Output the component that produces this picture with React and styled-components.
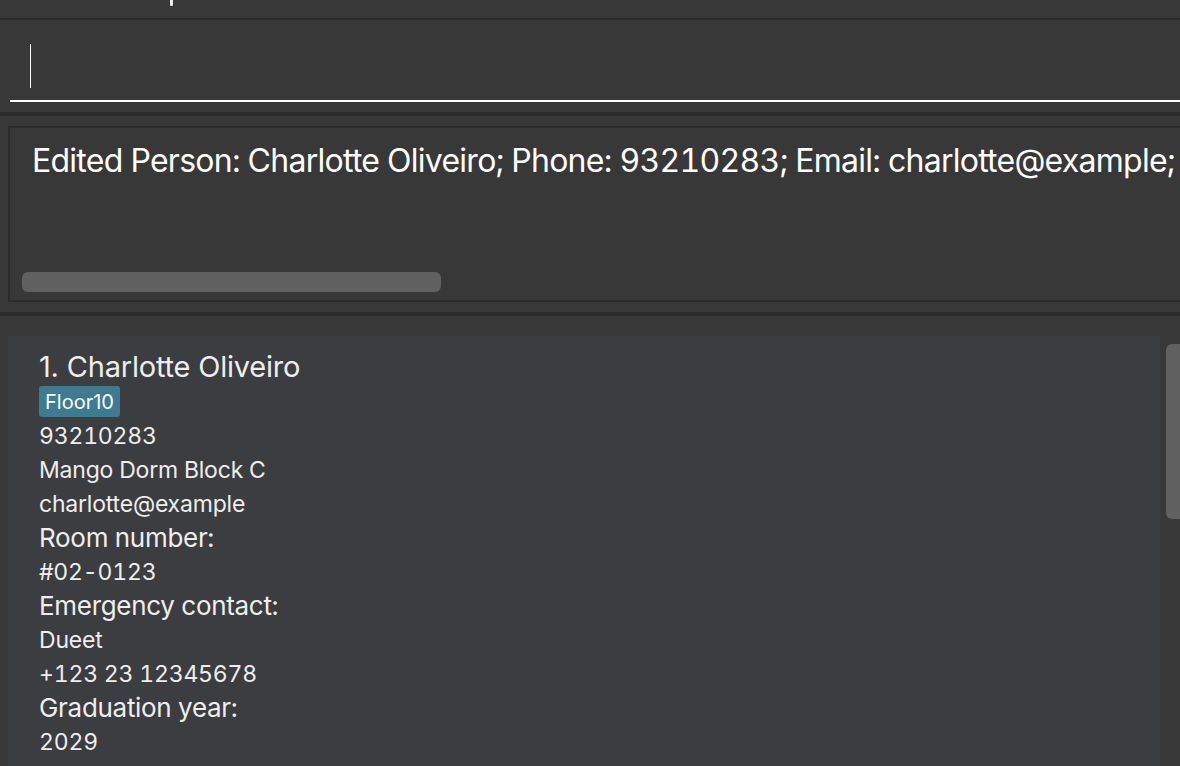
import styled, { createGlobalStyle } from "styled-components";

const GlobalStyle = createGlobalStyle`
  html, body {
    margin: 0;
    padding: 0;
    background-color: #383838;
    overflow: hidden;
  }
  * {
    box-sizing: border-box;
  }
`;

const Window = styled.div`
  width: 1180px;
  height: 766px;
  display: flex;
  flex-direction: column;
  background-color: #383838;
  font-family: Inter, "Noto Sans", sans-serif;
  overflow: hidden;
`;

const MenuBar = styled.div`
  height: 20px;
  flex-shrink: 0;
  border-bottom: 2px solid #2b2b2b;
  position: relative;
`;

// descender of the menu label scrolled off the top edge
const MenuMark = styled.div`
  position: absolute;
  left: 170px;
  top: 0;
  width: 3px;
  height: 6px;
  border-radius: 0 0 1px 1px;
  background-color: #e8e8e8;
`;

const CommandSection = styled.div`
  height: 92px;
  flex-shrink: 0;
  padding: 10px 0 0 10px;
`;

const CommandBox = styled.div`
  height: 72px;
  border-bottom: 2px solid #ffffff;
  padding: 14px 0 0 20px;
`;

const Caret = styled.div`
  width: 1px;
  height: 44px;
  background-color: #ffffff;
`;

const Divider = styled.div`
  height: 4px;
  flex-shrink: 0;
  background-color: #2b2b2b;
`;

const ResultSection = styled.div`
  height: 196px;
  flex-shrink: 0;
  padding: 10px 0 10px 8px;
`;

const ResultBox = styled.div`
  height: 100%;
  border: 2px solid #2b2b2b;
  border-right: none;
  display: flex;
  flex-direction: column;
  justify-content: space-between;
  padding: 12px 0 8px 12px;
  overflow: hidden;
`;

const ResultText = styled.div`
  font-size: 32px;
  line-height: 42px;
  letter-spacing: -0.74px;
  font-variant-numeric: tabular-nums;
  color: #ffffff;
  white-space: nowrap;
  padding-left: 10px;
`;

const HScrollThumb = styled.div`
  width: 419px;
  height: 20px;
  flex-shrink: 0;
  border-radius: 6px;
  background-color: #616161;
`;

const ListSection = styled.div`
  flex: 1;
  display: flex;
  padding: 20px 0 0 8px;
  min-height: 0;
`;

const Card = styled.div`
  width: 1152px;
  background-color: #3c3d40;
  padding: 14px 0 0 31px;
  color: #eeeeee;
`;

const ScrollTrack = styled.div`
  flex: 1;
  padding: 8px 0 0 6px;
`;

const VScrollThumb = styled.div`
  height: 175px;
  border-radius: 6px 0 0 6px;
  background-color: #616161;
`;

const Name = styled.div`
  font-size: 29px;
  line-height: 34px;
  letter-spacing: -0.2px;
`;

const Tags = styled.div`
  display: flex;
  gap: 6px;
  margin-top: 2px;
`;

const Tag = styled.span`
  display: inline-flex;
  align-items: center;
  height: 31px;
  padding: 0 6px;
  border-radius: 3px;
  background-color: #3e7b91;
  color: #ffffff;
  font-size: 20px;
`;

const Line = styled.div`
  font-size: ${(p) => (p.$label ? "26px" : "23px")};
  line-height: 34px;
  letter-spacing: ${(p) => (p.$label ? "-0.3px" : "-0.2px")};
  font-variant-numeric: tabular-nums;
  white-space: nowrap;
  transform: translateY(2px);
`;

const person = {
  name: "1. Charlotte Oliveiro",
  tags: ["Floor10"],
  lines: [
    { text: "93210283" },
    { text: "Mango Dorm Block C" },
    { text: "charlotte@example" },
    { text: "Room number:", label: true },
    { text: "#02-0123" },
    { text: "Emergency contact:", label: true },
    { text: "Dueet" },
    { text: "+123 23 12345678" },
    { text: "Graduation year:", label: true },
    { text: "2029" },
  ],
};

const App = () => {
  return (
    <>
      <GlobalStyle />
      <Window>
        <MenuBar>
          <MenuMark />
        </MenuBar>
        <CommandSection>
          <CommandBox>
            <Caret />
          </CommandBox>
        </CommandSection>
        <Divider />
        <ResultSection>
          <ResultBox>
            <ResultText>
              Edited Person: Charlotte Oliveiro; Phone: 93210283; Email:
              charlotte@example;
            </ResultText>
            <HScrollThumb />
          </ResultBox>
        </ResultSection>
        <Divider />
        <ListSection>
          <Card>
            <Name>{person.name}</Name>
            <Tags>
              {person.tags.map((t) => (
                <Tag key={t}>{t}</Tag>
              ))}
            </Tags>
            {person.lines.map((l, i) => (
              <Line key={i} $label={l.label}>
                {l.text}
              </Line>
            ))}
          </Card>
          <ScrollTrack>
            <VScrollThumb />
          </ScrollTrack>
        </ListSection>
      </Window>
    </>
  );
};

export default App;
